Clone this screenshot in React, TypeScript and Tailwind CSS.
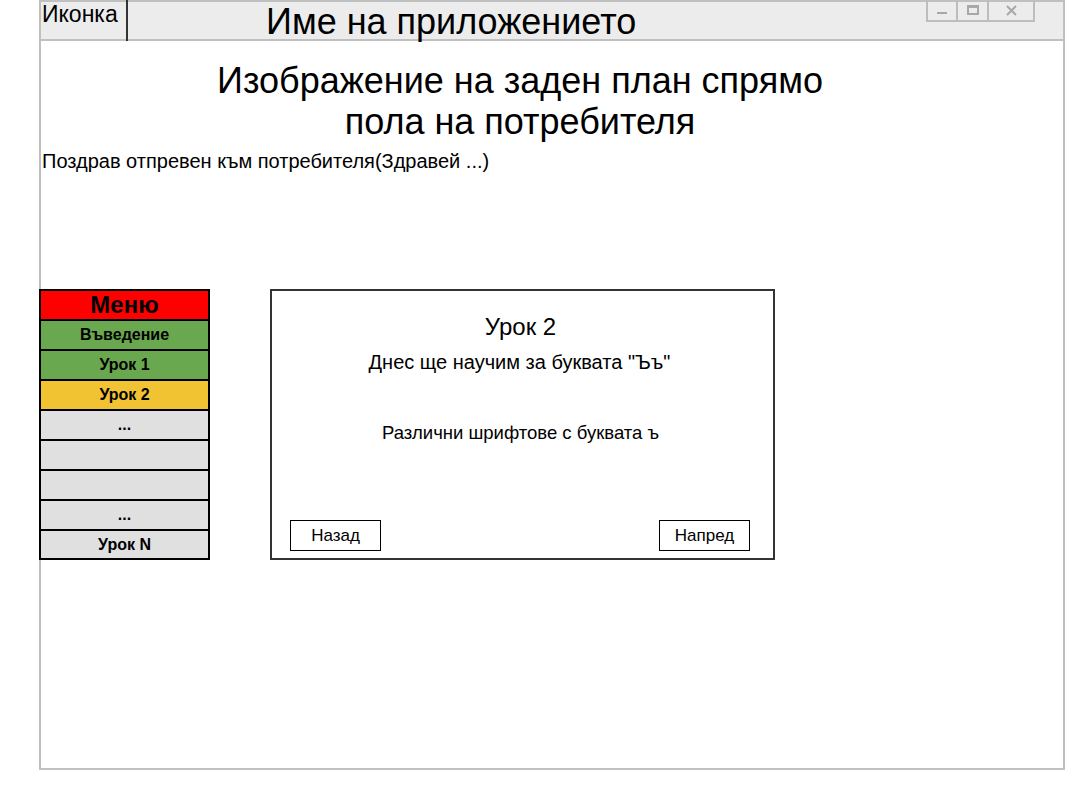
import React from "react";

const font = { fontFamily: '"Liberation Sans", Arial, sans-serif' };

function MenuRow({ label, bg, last = false }: { label: string; bg: string; last?: boolean }) {
  return (
    <div className={`${last ? "h-[27px]" : "h-[30px] border-b-2 border-black"} flex items-center justify-center ${bg} text-[16px] font-bold text-black`}>
      {label}
    </div>
  );
}

export default function App() {
  return (
    <div className="w-[1084px] h-[788px] bg-white text-black" style={font}>
      <div className="ml-[39px] w-[1026px] h-[770px] border-2 border-[#c0c0c0] flex flex-col">
        {/* title bar */}
        <div className="h-[39px] bg-[#ececec] border-b-2 border-[#c0c0c0] flex items-stretch shrink-0">
          <div className="w-[87px] border-r-2 border-[#333] -mt-[2px] -mb-[2px] pl-[1px]">
            <div className="text-[23px] leading-none mt-[3px]">Иконка</div>
          </div>
          <div className="ml-[138px] text-[36px] leading-none mt-[2px] whitespace-nowrap">Име на приложението</div>
          <div className="ml-auto mr-[28px] -mt-[2px] h-[22px] flex border-2 border-t-0 border-[#bdbdbd]">
            <div className="w-[30px] border-r-2 border-[#bdbdbd] flex items-center justify-center">
              <div className="w-[10px] h-[2px] bg-[#a8a8a8] mt-[6px]" />
            </div>
            <div className="w-[31px] border-r-2 border-[#bdbdbd] flex items-center justify-center">
              <div className="w-[12px] h-[10px] border-2 border-t-[3px] border-[#a8a8a8]" />
            </div>
            <div className="w-[44px] flex items-center justify-center">
              <svg width="11" height="11" viewBox="0 0 11 11">
                <path d="M1 1L10 10M10 1L1 10" stroke="#a8a8a8" strokeWidth="2" />
              </svg>
            </div>
          </div>
        </div>

        {/* content */}
        <div className="flex flex-col">
          <div className="w-[958px] mt-[19px] text-center text-[36px] leading-[41px]">
            Изображение на заден план спрямо<br />пола на потребителя
          </div>
          <div className="mt-[7px] pl-[1px] text-[20px] leading-[24px]">
            Поздрав отпревен към потребителя(Здравей ...)
          </div>

          <div className="mt-[116px] flex items-start">
            <div className="-ml-[2px] w-[171px] border-2 border-black flex flex-col">
              <div className="h-[30px] flex items-center justify-center bg-[#ff0000] text-[24px] font-bold border-b-2 border-black">Меню</div>
              <MenuRow label="Въведение" bg="bg-[#6aa84f]" />
              <MenuRow label="Урок 1" bg="bg-[#6aa84f]" />
              <MenuRow label="Урок 2" bg="bg-[#f1c232]" />
              <MenuRow label="..." bg="bg-[#e0e0e0]" />
              <MenuRow label="" bg="bg-[#e0e0e0]" />
              <MenuRow label="" bg="bg-[#e0e0e0]" />
              <MenuRow label="..." bg="bg-[#e0e0e0]" />
              <MenuRow label="Урок N" bg="bg-[#e0e0e0]" last />
            </div>

            <div className="ml-[60px] w-[505px] h-[271px] border-2 border-[#333] flex flex-col">
              <div className="mt-[22px] pr-[4px] text-center text-[24px] leading-[28px]">Урок 2</div>
              <div className="mt-[9px] pr-[6px] text-center text-[20px] leading-[24px]">Днес ще научим за буквата "Ъъ"</div>
              <div className="mt-[48px] pr-[4px] text-center text-[18.5px] leading-[22px]">Различни шрифтове с буквата ъ</div>
              <div className="mt-auto mb-[7px] pl-[18px] pr-[23px] flex justify-between">
                <div className="w-[91px] h-[31px] border border-black flex items-center justify-center text-[17px]">Назад</div>
                <div className="w-[91px] h-[31px] border border-black flex items-center justify-center text-[17px]">Напред</div>
              </div>
            </div>
          </div>
        </div>
      </div>
    </div>
  );
}
